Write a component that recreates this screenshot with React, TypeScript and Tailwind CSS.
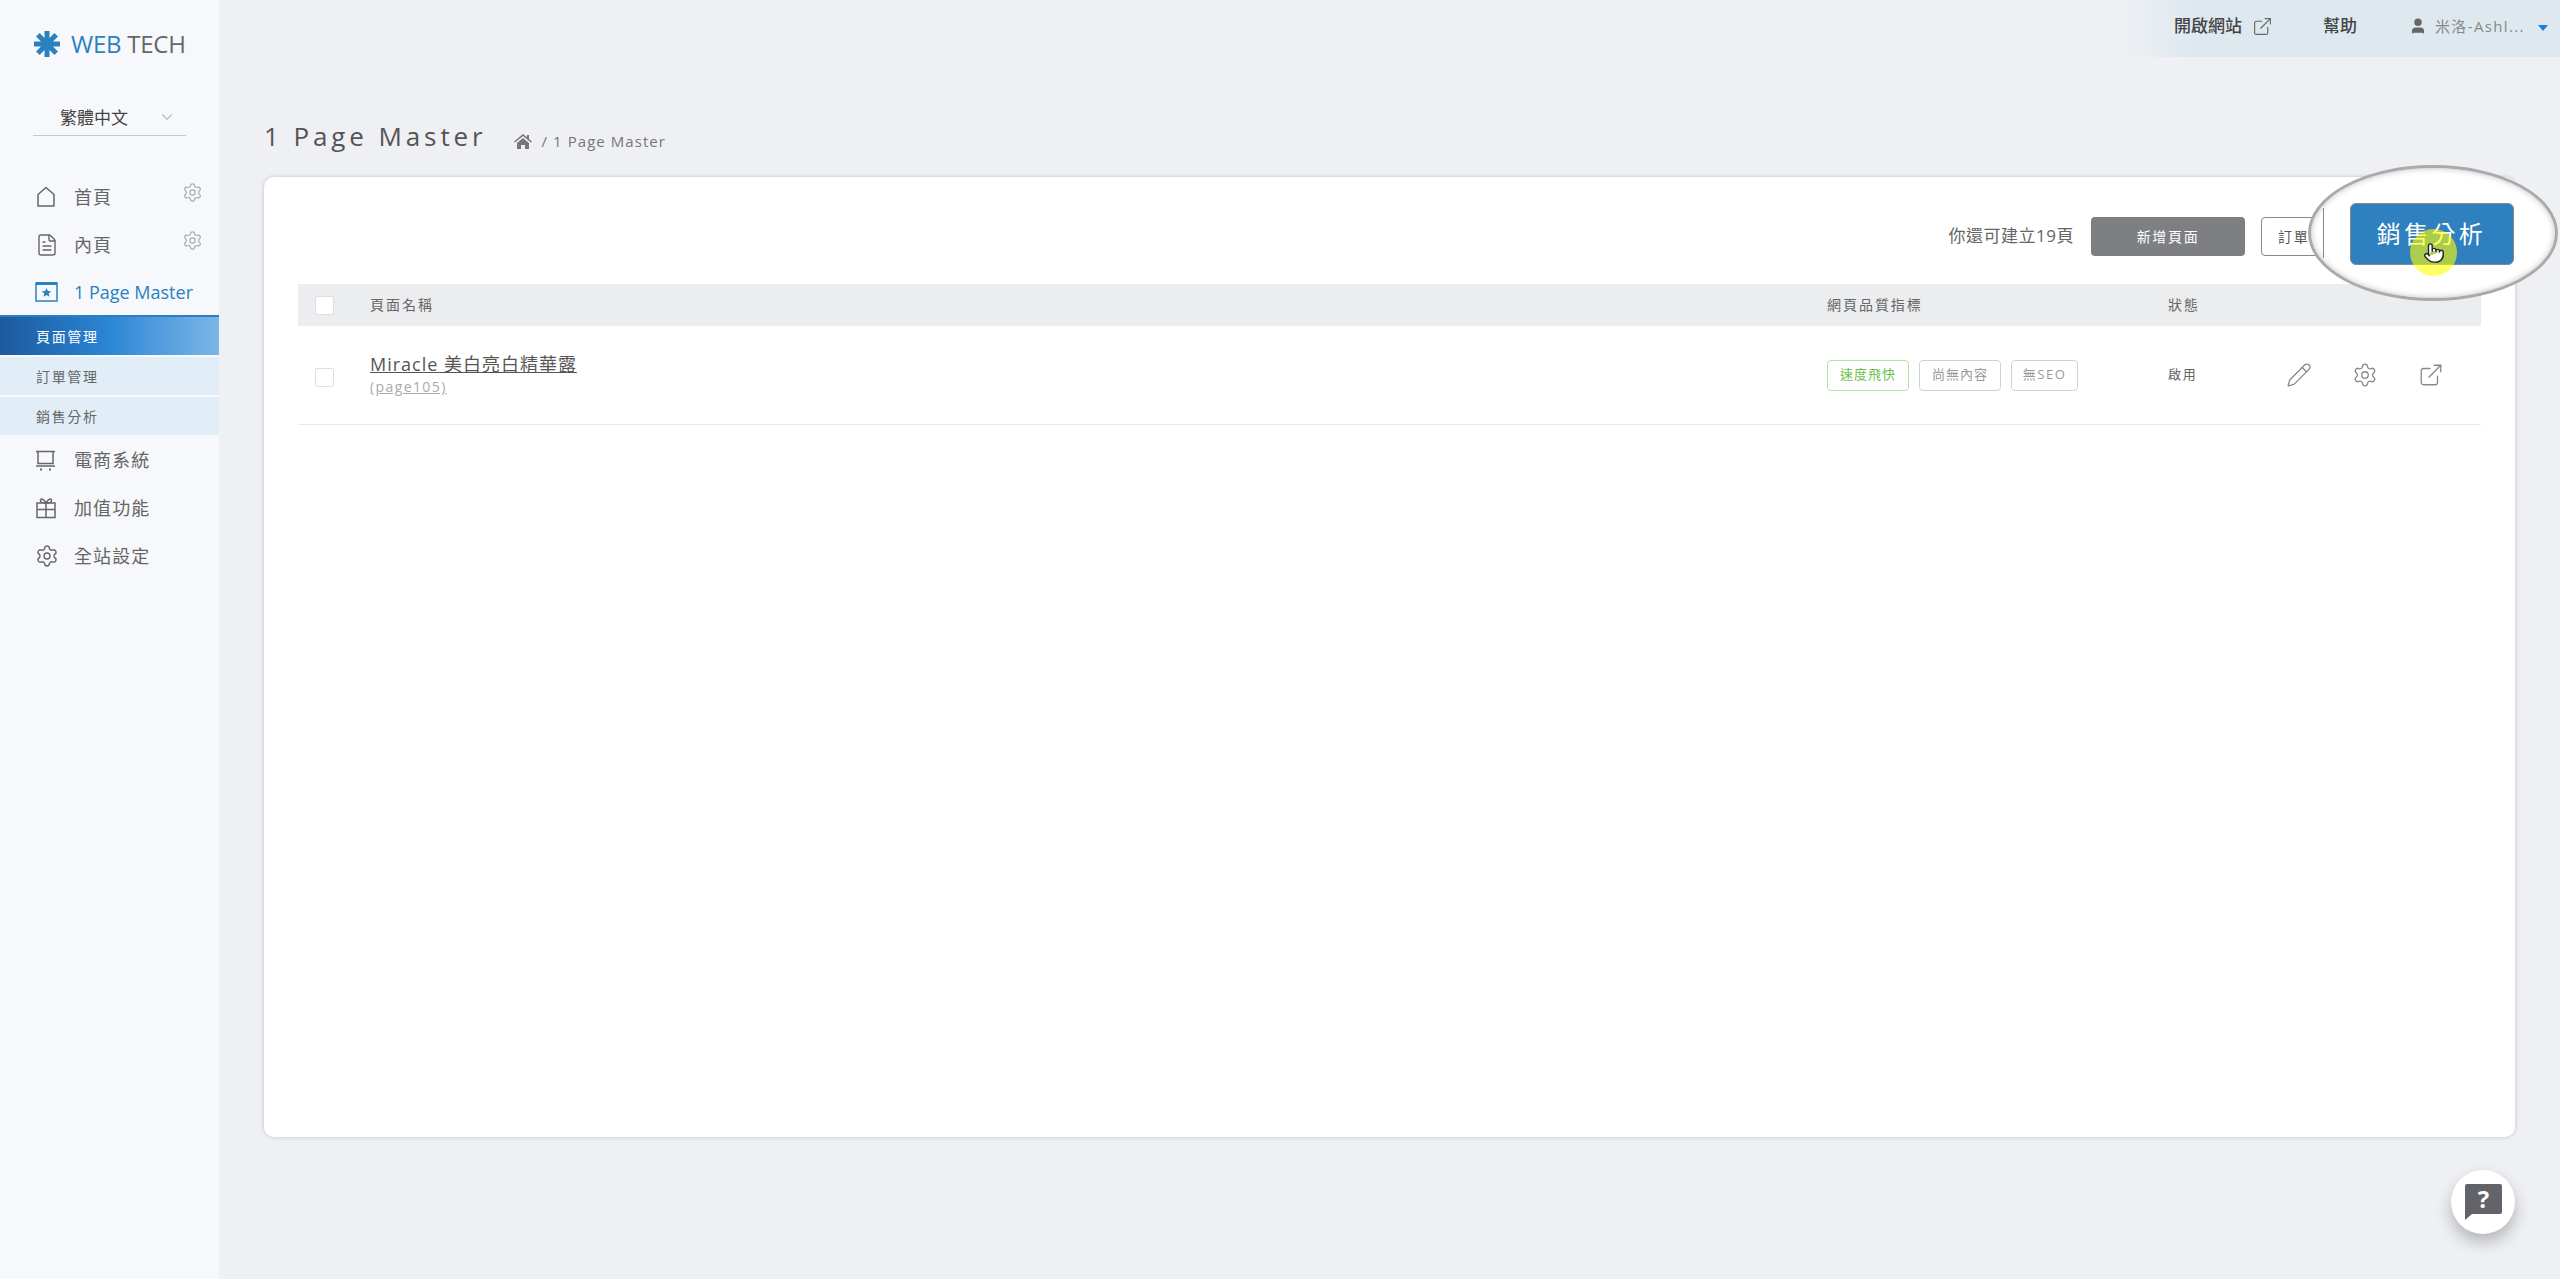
import { ExternalLink, FileText, Settings, ChevronDown, Pencil, User, Pointer } from 'lucide-react';
import type { ReactNode } from 'react';

const FONT = { fontFamily: '"Open Sans","Noto Sans CJK TC",sans-serif' };

function HomeIcon() {
  return (
    <svg width="22" height="22" viewBox="0 0 22 22" fill="none" stroke="#666" strokeWidth="1.5">
      <path d="M3 20V8.500L11 1.500l8 7V20z" strokeLinejoin="round" />
    </svg>
  );
}

function CartIcon() {
  return (
    <svg width="22" height="22" viewBox="0 0 22 22" fill="none" stroke="#666" strokeWidth="1.5">
      <path d="M1 2.500h19M3 2.500v12h15v-12M1 17h19" />
      <path d="M5 20.500h2M14 20.500h2" strokeWidth="2" />
    </svg>
  );
}

function GiftIcon() {
  return (
    <svg width="22" height="22" viewBox="0 0 22 22" fill="none" stroke="#666" strokeWidth="1.5">
      <rect x="2" y="6" width="18" height="14.500" />
      <path d="M2 12.500h18M11 6v14.500" />
      <path d="M11 6C8 1 5 1 5.500 4 5.700 5.500 8 6 11 6c3 0 5.300-.5 5.500-2C17 1 14 1 11 6z" />
    </svg>
  );
}

function NavItem({ icon, label, gear }: { icon: ReactNode; label: string; gear?: boolean }) {
  return (
    <div className="relative flex h-[48px] items-center pl-[35px] text-[#666]">
      <span className="flex w-[39px] items-center">{icon}</span>
      <span className="text-[18px] tracking-[0.06em]">{label}</span>
      {gear && <Settings className="absolute top-[9px] left-[182px] size-[21px] text-[#aaa]" strokeWidth={1.4} />}
    </div>
  );
}

function SubItem({ label, active }: { label: string; active?: boolean }) {
  return (
    <div
      className={
        active
          ? 'flex h-[40px] items-center border-t-2 border-[#2b7fc0] bg-gradient-to-r from-[#1c5a9e] via-[#2a86d6] to-[#7ab6e6] pl-[36px] text-[14px] tracking-[0.12em] text-white'
          : 'flex h-[38px] items-center bg-[#e2eef7] pl-[36px] text-[14px] tracking-[0.12em] text-[#666]'
      }
    >
      {label}
    </div>
  );
}

function Sidebar() {
  return (
    <aside className="w-[219px] shrink-0 bg-[#f6f8fb]">
      <div className="flex h-[88px] items-center pl-[34px]">
        <svg width="26" height="26" viewBox="0 0 26 26" className="mr-[11px]">
          <path d="M13 0v26M0 13h26M3.800 3.800l18.400 18.400M22.200 3.800L3.800 22.200" stroke="#2b80c0" strokeWidth="5" />
        </svg>
        <span className="text-[24px] leading-none tracking-[-0.01em]">
          <span className="text-[#2b80c0]">WEB</span>
          <span className="ml-[6px] text-[#666]">TECH</span>
        </span>
      </div>
      <div className="mx-[33px] flex h-[48px] items-end justify-between border-b border-[#c8c8c8] pr-[10px] pb-[5px] pl-[27px] text-[17px] leading-[24px] text-[#444]">
        繁體中文
        <ChevronDown className="mb-[4px] size-[18px] text-[#bbb]" strokeWidth={1.5} />
      </div>
      <div className="mt-[37px]">
        <NavItem icon={<HomeIcon />} label="首頁" gear />
        <NavItem icon={<FileText className="size-[24px]" strokeWidth={1.4} />} label="內頁" gear />
        <div className="flex h-[46px] items-center pl-[35px] text-[#2b80c0]">
          <span className="w-[39px]">
            <svg width="23" height="22" viewBox="0 0 23 22" fill="none">
              <rect x="1" y="2" width="21" height="18" stroke="#2b80c0" strokeWidth="1.5" />
              <rect x="1" y="1" width="21" height="3" fill="#2b80c0" />
              <path d="M11.500 7l1.400 3 3.300.3-2.500 2.200.8 3.200-3-1.700-3 1.700.8-3.200-2.500-2.200 3.300-.3z" fill="#2b80c0" />
            </svg>
          </span>
          <span className="text-[18px]">1 Page Master</span>
        </div>
        <SubItem label="頁面管理" active />
        <div className="mt-[2px]"><SubItem label="訂單管理" /></div>
        <div className="mt-[2px]"><SubItem label="銷售分析" /></div>
        <div className="mt-[1px]">
          <NavItem icon={<CartIcon />} label="電商系統" />
          <NavItem icon={<GiftIcon />} label="加值功能" />
          <NavItem icon={<Settings className="size-[24px]" strokeWidth={1.4} />} label="全站設定" />
        </div>
      </div>
    </aside>
  );
}

function TopBar() {
  return (
    <div className="flex h-[57px] justify-end">
      <div className="flex w-[440px] items-center bg-gradient-to-r from-[#eff0f4] to-[#dde8ef] to-[18%] pb-[5px] text-[17px]">
        <span className="ml-[54px] font-medium text-[#444]">開啟網站</span>
        <ExternalLink className="ml-[10px] size-[21px] text-[#666]" strokeWidth={1.3} />
        <span className="ml-[50px] font-medium text-[#444]">幫助</span>
        <User className="ml-[52px] size-[18px] fill-[#666] text-[#666]" />
        <span className="ml-[8px] text-[15px] tracking-[0.09em] text-[#888]">米洛-Ashl...</span>
        <span className="mt-[4px] ml-[13px] border-x-[5px] border-t-[6px] border-x-transparent border-t-[#1e7fd0]" />
      </div>
    </div>
  );
}

function Badge({ children, green, wide }: { children: ReactNode; green?: boolean; wide?: boolean }) {
  return (
    <span
      className={
        green
          ? 'flex h-[31px] w-[82px] items-center justify-center rounded-[4px] border border-[#b5e3a2] text-[13px] tracking-[0.08em] text-[#6cc04a]'
          : wide
            ? 'flex h-[31px] w-[82px] items-center justify-center rounded-[4px] border border-[#d2d2d2] text-[13px] tracking-[0.08em] text-[#999]'
            : 'flex h-[31px] w-[67px] items-center justify-center rounded-[4px] border border-[#d2d2d2] text-[13px] tracking-[0.12em] text-[#999]'
      }
    >
      {children}
    </span>
  );
}

function Check() {
  return <span className="block size-[19px] rounded-[2px] border border-[#dcdfe6] bg-white" />;
}

function Card() {
  return (
    <div className="mx-[45px] mt-[23px] h-[960px] rounded-[10px] bg-white px-[34px] pt-[39px] shadow-[0_0_4px_rgba(0,0,0,0.2)]">
      <div className="flex h-[68px] items-start justify-end">
        <span className="mt-[7px] mr-[17px] text-[17px] tracking-[0.03em] text-[#666]">你還可建立19頁</span>
        <span className="mt-[1px] flex h-[39px] w-[154px] items-center justify-center rounded-[4px] bg-[#7d7f83] text-[14px] tracking-[0.12em] text-white">新增頁面</span>
        <span className="mt-[1px] ml-[16px] flex h-[39px] w-[120px] items-center rounded-[4px] border border-[#888] pl-[16px] text-[14px] tracking-[0.12em] text-[#555]">訂單管理</span>
        <span className="w-[100px]" />
      </div>
      <div className="grid h-[42px] grid-cols-[72px_1457px_341px_1fr] items-center bg-[#ecedef] pb-[2px] text-[14px] tracking-[0.14em] text-[#666]">
        <span className="pt-[2px] pl-[17px]"><Check /></span>
        <span>頁面名稱</span>
        <span>網頁品質指標</span>
        <span>狀態</span>
      </div>
      <div className="grid h-[99px] grid-cols-[72px_1457px_341px_1fr] items-center border-b border-[#ebebeb]">
        <span className="mt-[4px] pl-[17px]"><Check /></span>
        <div className="mt-[-1px]">
          <div className="text-[18px] leading-[24px] tracking-[0.055em] text-[#555] underline">Miracle 美白亮白精華露</div>
          <div className="text-[14px] leading-[21px] tracking-[0.1em] text-[#aaa] underline">(page105)</div>
        </div>
        <div className="flex gap-[10px]">
          <Badge green>速度飛快</Badge>
          <Badge wide>尚無內容</Badge>
          <Badge>無SEO</Badge>
        </div>
        <div className="flex items-center">
          <span className="text-[13px] tracking-[0.14em] whitespace-nowrap text-[#666]">啟用</span>
          <Pencil className="ml-[88px] size-[26px] text-[#888]" strokeWidth={1.2} />
          <Settings className="ml-[40px] size-[26px] text-[#888]" strokeWidth={1.2} />
          <ExternalLink className="ml-[40px] size-[26px] text-[#888]" strokeWidth={1.2} />
        </div>
      </div>
    </div>
  );
}

export default function App() {
  return (
    <div className="relative flex h-[1279px] w-[2560px] overflow-hidden bg-[#eff0f4]" style={FONT}>
      <Sidebar />
      <main className="min-w-0 flex-1">
        <TopBar />
        <div className="mt-[60px] flex h-[37px] items-center pl-[45px]">
          <h1 className="text-[26px] leading-none tracking-[0.15em] text-[#555]">1 Page Master</h1>
          <svg width="18" height="16" viewBox="0 0 18 16" className="mt-[10px] ml-[27px]" fill="#777">
            <path d="M9 1L0 8.500l1 1L9 3l8 6.500 1-1-3-2.500V2h-2v2.300zM3 10v6h4v-4h4v4h4v-6L9 5z" />
          </svg>
          <span className="mt-[11px] ml-[10px] text-[15px] tracking-[0.07em] text-[#777]">/ 1 Page Master</span>
        </div>
        <Card />
      </main>

      {/* callout over the toolbar */}
      <div className="absolute top-[165px] left-[2308px] flex h-[136px] w-[250px] items-center justify-center rounded-[50%] border-[3px] border-[#aaa] bg-white shadow-[inset_0_0_6px_rgba(0,0,0,0.25)]">
        <span className="mt-[1px] -ml-[3px] flex h-[62px] w-[164px] items-center justify-center rounded-[6px] border border-[#888] bg-[#2f80be] text-[24px] tracking-[0.14em] text-white">銷售分析</span>
      </div>
      <div className="absolute top-[208px] left-[2323px] h-[50px] w-px bg-[#888]" />
      <div className="absolute top-[229px] left-[2410px] flex size-[47px] items-center justify-center rounded-full bg-[#ffff00]/60">
        <Pointer className="size-[22px] fill-white text-[#222]" strokeWidth={1.5} />
      </div>

      <div className="absolute top-[1170px] left-[2451px] flex size-[64px] items-center justify-center rounded-full bg-white shadow-[0_8px_16px_rgba(0,0,0,0.25)]">
        <svg width="38" height="38" viewBox="0 0 38 38">
          <path d="M3 1h33a2 2 0 0 1 2 2v26a2 2 0 0 1-2 2H8l-7 6V3a2 2 0 0 1 2-2z" fill="#636469" />
          <text x="19.500" y="25" textAnchor="middle" fontSize="24" fontWeight="700" fill="#fff" fontFamily="Open Sans">?</text>
        </svg>
      </div>
    </div>
  );
}
